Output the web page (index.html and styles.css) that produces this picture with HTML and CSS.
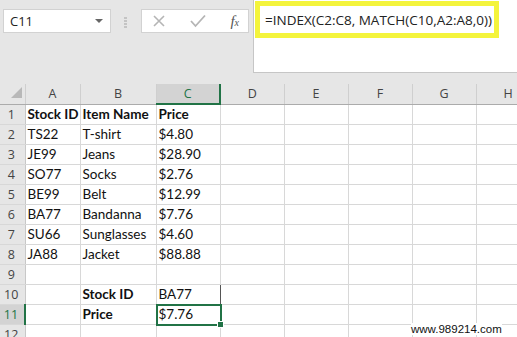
FILE: index.html
```html
<!DOCTYPE html>
<html lang="en">
<head>
  <meta charset="UTF-8">
  <title>INDEX MATCH</title>
  <link rel="stylesheet" href="styles.css">
</head>
<body>
  <div class="toolbar">
    <div class="namebox">
      <span>C11</span>
      <svg class="drop" width="8" height="5" viewBox="0 0 8 5"><path d="M0 0h8L4 4z" fill="#666"/></svg>
    </div>
    <div class="grip">
      <i></i><i></i><i></i><i></i>
    </div>
    <div class="fxbox">
      <svg width="14" height="14" viewBox="0 0 14 14"><path d="M2 2l10 10M12 2L2 12" stroke="#b5b5b5" stroke-width="1.6"/></svg>
      <svg width="16" height="14" viewBox="0 0 16 14"><path d="M1 7l4.5 5L15 1.5" stroke="#b5b5b5" stroke-width="1.8" fill="none"/></svg>
      <span class="fx">f<small>x</small></span>
    </div>
    <div class="formula">
      <div class="highlight">=INDEX(C2:C8, MATCH(C10,A2:A8,0))</div>
    </div>
  </div>

  <table class="sheet">
    <colgroup>
      <col style="width:25px">
      <col style="width:55px">
      <col style="width:76px">
      <col style="width:64px">
      <col style="width:64px">
      <col style="width:64px">
      <col style="width:64px">
      <col style="width:64px">
      <col style="width:64px">
    </colgroup>
    <tr class="colhead">
      <th class="corner"><svg width="11" height="11" viewBox="0 0 11 11"><path d="M11 0v11H0z" fill="#b8b8b8"/></svg></th>
      <th>A</th><th>B</th><th class="sel">C</th><th>D</th><th>E</th><th>F</th><th>G</th><th>H</th>
    </tr>
    <tr><th>1</th><td class="b">Stock ID</td><td class="b">Item Name</td><td class="b">Price</td><td></td><td></td><td></td><td></td><td></td></tr>
    <tr><th>2</th><td>TS22</td><td>T-shirt</td><td>$4.80</td><td></td><td></td><td></td><td></td><td></td></tr>
    <tr><th>3</th><td>JE99</td><td>Jeans</td><td>$28.90</td><td></td><td></td><td></td><td></td><td></td></tr>
    <tr><th>4</th><td>SO77</td><td>Socks</td><td>$2.76</td><td></td><td></td><td></td><td></td><td></td></tr>
    <tr><th>5</th><td>BE99</td><td>Belt</td><td>$12.99</td><td></td><td></td><td></td><td></td><td></td></tr>
    <tr><th>6</th><td>BA77</td><td>Bandanna</td><td>$7.76</td><td></td><td></td><td></td><td></td><td></td></tr>
    <tr><th>7</th><td>SU66</td><td>Sunglasses</td><td>$4.60</td><td></td><td></td><td></td><td></td><td></td></tr>
    <tr><th>8</th><td>JA88</td><td>Jacket</td><td>$88.88</td><td></td><td></td><td></td><td></td><td></td></tr>
    <tr><th>9</th><td></td><td></td><td></td><td></td><td></td><td></td><td></td><td></td></tr>
    <tr><th>10</th><td></td><td class="b">Stock ID</td><td class="ref">BA77</td><td></td><td></td><td></td><td></td><td></td></tr>
    <tr><th class="sel">11</th><td></td><td class="b">Price</td><td class="active">$7.76</td><td></td><td></td><td></td><td></td><td></td></tr>
    <tr><th>12</th><td></td><td></td><td></td><td></td><td></td><td></td><td></td><td></td></tr>
  </table>

  <div class="watermark">www.989214.com</div>
</body>
</html>
```

FILE: styles.css
```css
body {
  margin: 0;
  background: #e6e6e6;
  overflow: hidden;
  font-family: Lato, "Open Sans", sans-serif;
  position: relative;
  height: 337px;
}

/* formula bar */
.toolbar {
  height: 84px;
  display: flex;
  align-items: flex-start;
}
.namebox {
  margin: 9px 0 0 3px;
  width: 106px;
  height: 22px;
  background: #fff;
  border: 1px solid #d2d2d2;
  display: flex;
  align-items: center;
  justify-content: space-between;
  padding: 0 7px 0 6px;
  box-sizing: border-box;
  width: 108px;
  height: 24px;
  font-family: "Open Sans", sans-serif;
  font-size: 13px;
  color: #222;
}
.grip {
  margin: 17px 0 0 13px;
  display: flex;
  flex-direction: column;
  gap: 1px;
}
.grip i {
  display: block;
  width: 3px;
  height: 2px;
  background: #c4c4c4;
}
.fxbox {
  margin: 9px 0 0 14px;
  width: 108px;
  height: 24px;
  box-sizing: border-box;
  background: #fff;
  border: 1px solid #d2d2d2;
  display: flex;
  align-items: center;
  justify-content: space-between;
  padding: 0 9px 0 10px;
}
.fx {
  font-family: "Liberation Serif", serif;
  font-style: italic;
  font-size: 15px;
  color: #555;
}
.fx small {
  font-size: 10px;
}
.formula {
  margin-left: 4px;
  flex: 1;
  height: 73px;
  background: #fff;
  border-left: 1px solid #c6c6c6;
  border-bottom: 1px solid #c6c6c6;
  box-sizing: border-box;
}
.highlight {
  display: inline-block;
  margin: 1px 0 0 1px;
  width: 244px;
  height: 37px;
  box-sizing: border-box;
  border: 5px solid #f4f43c;
  padding: 5px 0 0 5px;
  font-family: "Open Sans", sans-serif;
  font-size: 13.5px;
  color: #222;
  white-space: nowrap;
}

/* grid */
.sheet {
  border-collapse: collapse;
  table-layout: fixed;
  width: 540px;
  background: #fff;
}
.sheet tr {
  height: 20px;
}
.sheet td {
  border: 1px solid #d8d8d8;
  padding: 0 0 0 2px;
  font-size: 13.5px;
  color: #111;
  white-space: nowrap;
  overflow: visible;
  line-height: 18px;
}
.sheet td.b {
  font-weight: bold;
}
.sheet th {
  background: #e6e6e6;
  font-weight: normal;
  font-family: "Open Sans", sans-serif;
  font-size: 12.5px;
  color: #444;
  border-right: 1px solid #c8c8c8;
  border-bottom: 1px solid #d8d8d8;
  padding: 0 2px 0 0;
  text-align: center;
}
.colhead th {
  border-right: 1px solid #cfcfcf;
  border-bottom: 1px solid #ababab;
  padding: 0;
}
.colhead th.corner {
  text-align: right;
  vertical-align: bottom;
  padding: 0 3px 2px 0;
}
.colhead th.sel {
  background: #d3d3d3;
  color: #217346;
  border-bottom: 2px solid #217346;
}
.sheet th.sel {
  background: #d3d3d3;
  color: #217346;
  border-right: 2px solid #217346;
}
.sheet td.ref {
  border: 1px solid #555;
}
.sheet td.active {
  position: relative;
}
.sheet td.active::after {
  content: "";
  position: absolute;
  left: -1px;
  top: -1px;
  right: -2px;
  bottom: -2px;
  border: 2px solid #217346;
}
.sheet td.active::before {
  content: "";
  position: absolute;
  right: -4px;
  bottom: -4px;
  width: 5px;
  height: 5px;
  background: #217346;
  border: 1px solid #fff;
  z-index: 2;
}

.watermark {
  position: absolute;
  left: 411px;
  top: 323px;
  font-family: "Liberation Sans", Arial, sans-serif;
  font-size: 11.5px;
  color: #111;
  background: #fff;
}
```
